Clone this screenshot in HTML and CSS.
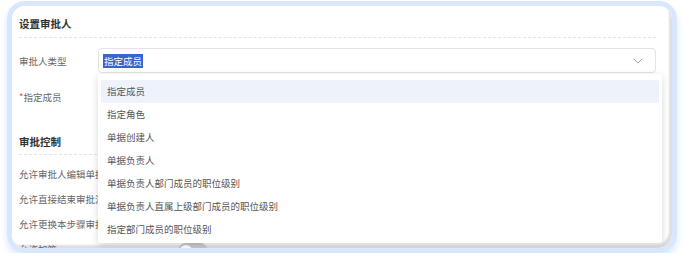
FILE: index.html
```html
<!DOCTYPE html>
<html lang="zh-CN">
<head>
  <meta charset="UTF-8" />
  <title>设置审批人</title>
  <link rel="stylesheet" href="styles.css">
</head>
<body>
  <div class="frame">
    <div class="panel">

      <!-- 设置审批人 -->
      <div class="section-title">设置审批人</div>
      <div class="form-row first">
        <label class="form-label">审批人类型</label>
        <div class="select">
          <span class="select-value">指定成员</span>
          <svg class="chevron" width="10" height="6" viewBox="0 0 10 6">
            <path d="M1 1 L5 5 L9 1" fill="none" stroke="#a8a8a8" stroke-width="1"/>
          </svg>
        </div>

        <ul class="dropdown">
          <li class="active">指定成员</li>
          <li>指定角色</li>
          <li>单据创建人</li>
          <li>单据负责人</li>
          <li>单据负责人部门成员的职位级别</li>
          <li>单据负责人直属上级部门成员的职位级别</li>
          <li>指定部门成员的职位级别</li>
        </ul>
      </div>
      <div class="form-row second">
        <label class="form-label"><span class="required">*</span>指定成员</label>
      </div>

      <!-- 审批控制 -->
      <div class="section-title control">审批控制</div>
      <div class="switch-row">允许审批人编辑单据</div>
      <div class="switch-row">允许直接结束审批流</div>
      <div class="switch-row">允许更换本步骤审批人</div>
      <div class="switch-row">
        <span class="switch-label">允许加签</span>
        <span class="toggle"><span class="knob"></span></span>
      </div>

    </div>
  </div>
</body>
</html>
```

FILE: styles.css
```css
body {
  margin: 0;
  padding: 0;
  background: #fff;
  font-family: "Noto Sans CJK SC", "Noto Sans", sans-serif;
  font-size: 9.5px;
  color: #555;
}

.frame {
  margin: 1px 9px 0 7px;
  height: 242px;
  border: 5px solid #d8e7fd;
  border-radius: 18px;
  box-shadow: 0 4px 7px rgba(200, 222, 252, 0.7);
  overflow: hidden;
}

.panel {
  position: relative;
  height: 100%;
  padding: 0 16px 0 7px;
  border-radius: 13px;
  background: #fff;
  box-shadow: inset -4px -4px 2px -1px rgba(0, 0, 0, 0.13);
  overflow: hidden;
}

.section-title {
  padding-top: 11px;
  padding-bottom: 6px;
  line-height: 14px;
  font-size: 10.5px;
  font-weight: 600;
  color: #333;
  border-bottom: 1px dashed #e3e3e3;
}

.section-title.control {
  margin-top: 26px;
  padding-top: 0;
  padding-bottom: 5px;
}

.form-row {
  position: relative;
  display: flex;
  align-items: center;
  height: 25px;
}

.form-row.first {
  margin-top: 10px;
}

.form-row.second {
  margin-top: 11px;
}

.form-label {
  width: 79px;
  flex-shrink: 0;
  color: #666;
}

.required {
  color: #e5484d;
}

.select {
  flex: 1;
  height: 23px;
  display: flex;
  align-items: center;
  justify-content: space-between;
  padding: 0 12px 0 4px;
  border: 1px solid #e3e3e3;
  border-radius: 4px;
}

.select-value {
  background: #3566cc;
  color: #fff;
  line-height: 14px;
  padding: 0 1px;
}

.chevron {
  display: block;
}

.dropdown {
  position: absolute;
  z-index: 5;
  left: 79px;
  top: 26px;
  width: 564px;
  margin: 0;
  padding: 6px 3px 2px;
  box-sizing: border-box;
  list-style: none;
  background: #fff;
  border-radius: 3px;
  box-shadow: 0 2px 7px rgba(0, 0, 0, 0.16);
}

.dropdown li {
  height: 23px;
  line-height: 23px;
  padding-left: 6px;
  color: #555;
  border-radius: 2px;
}

.dropdown li.active {
  background: #eef3fb;
}

.switch-row {
  display: flex;
  align-items: center;
  height: 25px;
  color: #666;
}

.section-title.control + .switch-row {
  margin-top: 6px;
}

.switch-label {
  width: 159px;
}

.toggle {
  position: relative;
  width: 30px;
  height: 16px;
  margin-top: 4px;
  border-radius: 8px;
  background: #c8c8c8;
}

.knob {
  position: absolute;
  left: 2px;
  top: 2px;
  width: 12px;
  height: 12px;
  border-radius: 50%;
  background: #fff;
}
```
